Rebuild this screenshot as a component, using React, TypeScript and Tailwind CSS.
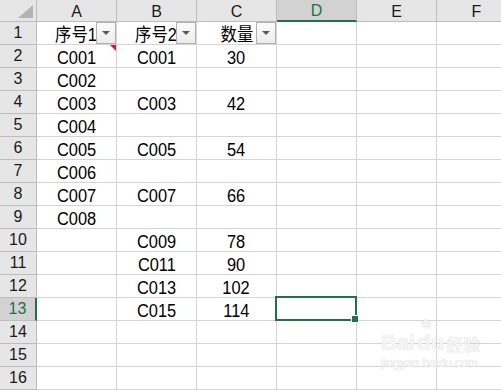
import React from "react";

const COLS = ["A", "B", "C", "D", "E", "F"];

type Row = { a?: string; b?: string; c?: string };

const rows: Row[] = [
  { a: "序号1", b: "序号2", c: "数量" },
  { a: "C001", b: "C001", c: "30" },
  { a: "C002" },
  { a: "C003", b: "C003", c: "42" },
  { a: "C004" },
  { a: "C005", b: "C005", c: "54" },
  { a: "C006" },
  { a: "C007", b: "C007", c: "66" },
  { a: "C008" },
  { b: "C009", c: "78" },
  { b: "C011", c: "90" },
  { b: "C013", c: "102" },
  { b: "C015", c: "114" },
  {},
  {},
  {},
];

function FilterButton() {
  return (
    <div className="absolute right-0 top-0 w-[20px] h-[22px] border border-[#b0b0b0] bg-gradient-to-b from-[#fbfbfb] to-[#ececec] flex items-center justify-center">
      <div className="w-0 h-0 border-l-[4px] border-r-[4px] border-t-[4px] border-l-transparent border-r-transparent border-t-[#5a5a5a]" />
    </div>
  );
}

function Cell({
  text,
  filter,
  comment,
  selected,
}: {
  text?: string;
  filter?: boolean;
  comment?: boolean;
  selected?: boolean;
}) {
  return (
    <div className="relative shrink-0 w-[80px] h-[23px] border-r border-b border-[#d4d4d4] bg-white">
      <div className="h-[22px] leading-[22px] text-center text-[18px] text-black whitespace-nowrap">
        {text && <span className="inline-block translate-y-[2px] scale-x-[0.91]">{text}</span>}
      </div>
      {filter && <FilterButton />}
      {comment && (
        <div className="absolute right-0 top-0 w-0 h-0 border-l-[6px] border-l-transparent border-t-[6px] border-t-[#e81123]" />
      )}
      {selected && (
        <div className="absolute left-[-2px] top-[-2px] w-[82px] h-[25px] border-2 border-[#217346] z-10">
          <div className="absolute right-[-4px] bottom-[-4px] w-[6px] h-[6px] bg-[#217346] border border-white box-content" />
        </div>
      )}
    </div>
  );
}

export default function App() {
  return (
    <div className="relative w-[501px] h-[390px] overflow-hidden bg-white [font-family:'Liberation_Sans','Noto_Sans_CJK_SC',sans-serif]">
      {/* column header row */}
      <div className="flex h-[22px]">
        <div className="relative shrink-0 w-[37px] h-[22px] bg-[#e6e6e6] border-r border-b border-[#bdbdbd]">
          <div className="absolute right-[3px] bottom-[3px] w-0 h-0 border-l-[15px] border-l-transparent border-b-[13px] border-b-[#b4b4b4]" />
        </div>
        {COLS.map((c) => {
          const sel = c === "D";
          return (
            <div
              key={c}
              className={
                sel
                  ? "shrink-0 w-[80px] h-[22px] bg-[#d2d2d2] border-r border-[#bdbdbd] border-b-2 border-b-[#217346] text-center text-[16px] leading-[20px] text-[#217346]"
                  : "shrink-0 w-[80px] h-[22px] bg-[#e6e6e6] border-r border-b border-[#bdbdbd] text-center text-[16px] leading-[21px] text-[#1a1a1a]"
              }
            >
              <span className="inline-block translate-y-[1px]">{c}</span>
            </div>
          );
        })}
      </div>

      {rows.map((r, i) => {
        const n = i + 1;
        const selRow = n === 13;
        return (
          <div key={n} className="flex h-[23px]">
            <div
              className={
                selRow
                  ? "shrink-0 w-[37px] h-[23px] bg-[#d2d2d2] border-b border-[#bdbdbd] border-r-2 border-r-[#217346] text-center text-[16px] leading-[22px] text-[#217346]"
                  : "shrink-0 w-[37px] h-[23px] bg-[#e6e6e6] border-r border-b border-[#bdbdbd] text-center text-[16px] leading-[22px] text-[#1a1a1a]"
              }
            >
              {n}
            </div>
            <Cell text={r.a} filter={n === 1} comment={n === 2} />
            <Cell text={r.b} filter={n === 1} />
            <Cell text={r.c} filter={n === 1} />
            <Cell selected={selRow} />
            <Cell />
            <Cell />
          </div>
        );
      })}

      {/* watermark */}
      <div className="absolute left-[381px] top-[332px] flex flex-col items-start pointer-events-none select-none">
        <div className="flex items-end gap-[2px] text-[22px] leading-[22px] font-bold text-[#f5f5f5] [font-family:'Liberation_Sans',sans-serif] [text-shadow:0_0_1px_#d0d0d0]">
          <span>Bai</span>
          <span className="relative">
            du
            <span className="absolute left-[4px] -top-[14px] text-[12px] leading-[12px]">❀</span>
          </span>
          <span className="text-[17px] leading-[20px] [font-family:'Noto_Sans_CJK_SC',sans-serif]">经验</span>
        </div>
        <div className="mt-[3px] text-[12px] leading-[13px] text-[#f5f5f5] [font-family:'Liberation_Sans',sans-serif] [text-shadow:0_0_1px_#d0d0d0]">
          jingyan.baidu.com
        </div>
      </div>
    </div>
  );
}
